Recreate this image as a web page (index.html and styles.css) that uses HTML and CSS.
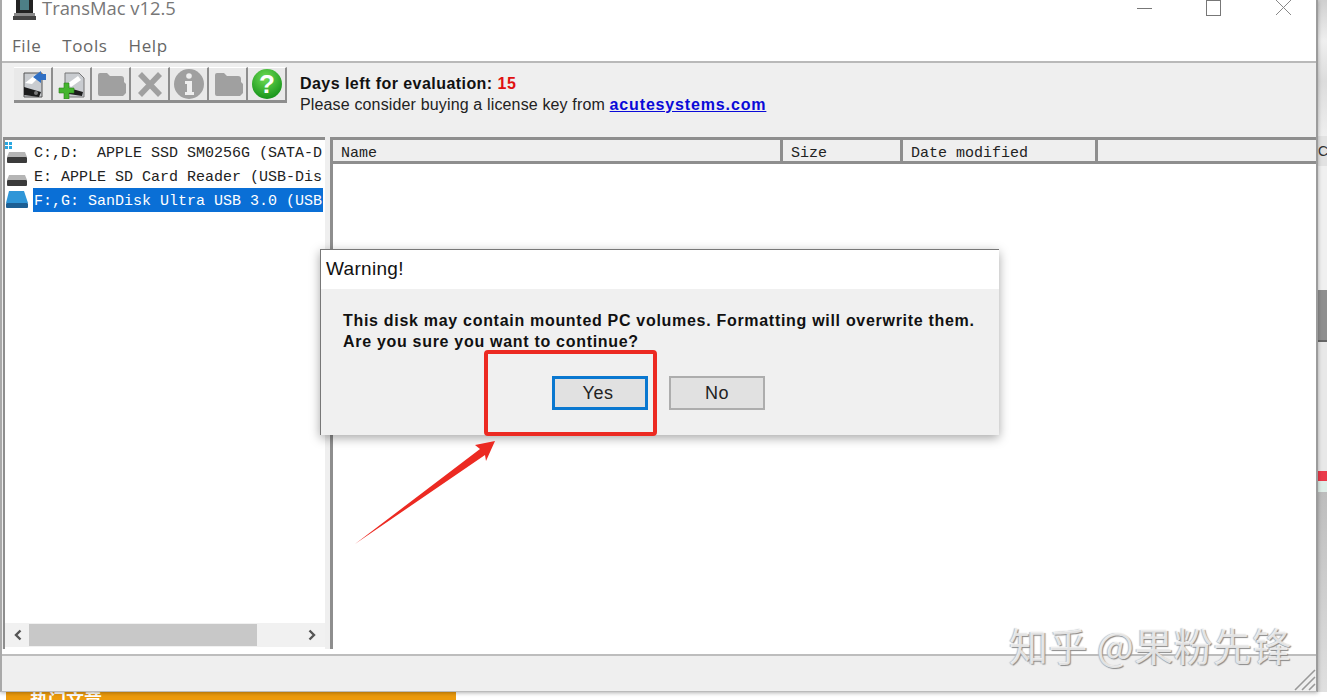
FILE: index.html
```html
<!DOCTYPE html>
<html lang="en">
<head>
  <meta charset="UTF-8" />
  <title>TransMac v12.5</title>
  <link rel="stylesheet" href="styles.css">
</head>
<body>
  <div class="screen">
    <div class="app">
      <!-- Title bar -->
      <header class="titlebar">
        <svg class="app-icon" width="26" height="22" viewBox="0 0 26 22">
          <rect x="4" y="0" width="17" height="14" fill="#222"/>
          <rect x="8" y="0" width="9" height="11" fill="#4d7f86"/>
          <rect x="2" y="14" width="21" height="3" fill="#8a8a8a"/>
          <rect x="1" y="17" width="23" height="4" fill="#444"/>
        </svg>
        <span class="app-title">TransMac v12.5</span>
        <div class="win-controls">
          <svg width="16" height="16" viewBox="0 0 16 16"><path d="M0 8.5H15" stroke="#777" fill="none"/></svg>
          <svg width="16" height="16" viewBox="0 0 16 16"><rect x="0.5" y="0.5" width="14" height="15" stroke="#777" fill="none"/></svg>
          <svg width="17" height="16" viewBox="0 0 17 16"><path d="M1 0L16 15M16 0L1 15" stroke="#888" fill="none"/></svg>
        </div>
      </header>

      <nav class="menubar">
        <span>File</span>
        <span>Tools</span>
        <span>Help</span>
      </nav>

      <!-- Toolbar -->
      <section class="toolbar">
        <div class="tools">
          <button class="tool">
            <svg width="30" height="30" viewBox="0 0 30 30">
              <path d="M6 4H24V28H6Z" fill="#c9ccd0" stroke="#555"/>
              <path d="M7 14L17 6H23L14 15Z" fill="#fff"/>
              <path d="M15 8L23 2V5H28V11H23V14Z" fill="#2f6fc4"/>
              <path d="M6 18L23 23L21 28L6 26Z" fill="#1c1c1c"/>
              <circle cx="18" cy="24" r="2" fill="#7a7a7a"/>
            </svg>
          </button>
          <button class="tool">
            <svg width="30" height="30" viewBox="0 0 30 30">
              <path d="M8 4H22L27 9V28H8Z" fill="#c9ccd0" stroke="#777"/>
              <path d="M10 15L21 7L24 11L14 18Z" fill="#fff"/>
              <path d="M12 19L26 23L25 27L12 25Z" fill="#1c1c1c"/>
              <path d="M7 14H12V19H17V24H12V30H7V24H2V19H7Z" fill="#45b52f" stroke="#2b7d1c" stroke-width="0.6"/>
            </svg>
          </button>
          <button class="tool">
            <svg width="30" height="30" viewBox="0 0 30 30"><use href="#folder-off"/></svg>
          </button>
          <button class="tool">
            <svg width="30" height="30" viewBox="0 0 30 30"><path d="M5 5L25 26M25 5L5 26" stroke="#a0a0a0" stroke-width="5.5" fill="none"/></svg>
          </button>
          <button class="tool">
            <svg width="32" height="32" viewBox="0 0 32 32">
              <circle cx="16" cy="16" r="15" fill="#a0a0a0"/>
              <circle cx="16" cy="8" r="2.8" fill="#efefef"/>
              <path d="M12 13H19V24H21V27H12V24H14V16H12Z" fill="#efefef"/>
            </svg>
          </button>
          <button class="tool">
            <svg width="30" height="30" viewBox="0 0 30 30"><use href="#folder-off"/></svg>
          </button>
          <button class="tool">
            <svg width="32" height="32" viewBox="0 0 32 32">
              <defs>
                <radialGradient id="greenBall" cx="0.45" cy="0.3" r="0.8">
                  <stop offset="0" stop-color="#6fdc55"/>
                  <stop offset="1" stop-color="#0a8a12"/>
                </radialGradient>
              </defs>
              <circle cx="16" cy="16" r="15" fill="url(#greenBall)"/>
              <text x="16" y="25" class="help-mark">?</text>
            </svg>
          </button>
        </div>
        <div class="eval">
          <div class="eval-days">Days left for evaluation: <span class="eval-num">15</span></div>
          <div class="eval-buy">Please consider buying a license key from <a href="#">acutesystems.com</a></div>
        </div>
      </section>

      <!-- Panes -->
      <main class="panes">
        <aside class="tree">
          <div class="tree-list">
            <div class="tree-row">
              <svg class="drive" width="26" height="24" viewBox="0 0 26 24">
                <rect x="0" y="2" width="3" height="3" fill="#2aa7e0"/><rect x="4" y="2" width="3" height="3" fill="#2aa7e0"/>
                <rect x="0" y="6" width="3" height="3" fill="#2aa7e0"/><rect x="4" y="6" width="3" height="3" fill="#2aa7e0"/>
                <path d="M4 12H20L22 17H2Z" fill="#b5b5b5"/>
                <rect x="2" y="17" width="20" height="6" rx="1" fill="#3b3b3b"/>
              </svg>
              <span>C:,D:  APPLE SSD SM0256G (SATA-D</span>
            </div>
            <div class="tree-row">
              <svg class="drive" width="26" height="24" viewBox="0 0 26 24">
                <path d="M4 11H20L22 16H2Z" fill="#b5b5b5"/>
                <rect x="2" y="16" width="20" height="6" rx="1" fill="#3b3b3b"/>
              </svg>
              <span>E: APPLE SD Card Reader (USB-Dis</span>
            </div>
            <div class="tree-row selected">
              <svg class="drive" width="26" height="24" viewBox="0 0 26 24">
                <path d="M4 3H19L23 15H1Z" fill="#2f96d8"/>
                <rect x="1" y="15" width="22" height="5" rx="1" fill="#1d5f94"/>
              </svg>
              <span>F:,G: SanDisk Ultra USB 3.0 (USB</span>
            </div>
          </div>
          <div class="hscroll">
            <svg width="10" height="12" viewBox="0 0 10 12"><path d="M7.5 1.5L3 6L7.5 10.5" stroke="#555" stroke-width="2.4" fill="none"/></svg>
            <div class="hscroll-track"><div class="hscroll-thumb"></div></div>
            <svg width="10" height="12" viewBox="0 0 10 12"><path d="M2.5 1.5L7 6L2.5 10.5" stroke="#555" stroke-width="2.4" fill="none"/></svg>
          </div>
        </aside>
        <section class="files">
          <div class="files-head">
            <div class="col col-name">Name</div>
            <div class="col col-size">Size</div>
            <div class="col col-date">Date modified</div>
            <div class="col col-rest"></div>
          </div>
        </section>
      </main>

      <footer class="statusbar">
        <svg class="grip" width="22" height="22" viewBox="0 0 22 22">
          <path d="M1 21L21 1M8 21L21 8M15 21L21 15" stroke="#999" stroke-width="1.6" fill="none"/>
        </svg>
      </footer>
    </div>

    <!-- What shows of the page behind the window -->
    <div class="behind-right">
      <div class="br-top"></div>
      <div class="br-ca">Ca</div>
      <div class="br-light"></div>
      <div class="br-dark"></div>
      <div class="br-red"></div>
      <div class="br-bottom"></div>
    </div>
    <div class="behind-bottom">
      <div class="banner">热门文章</div>
    </div>
  </div>

  <!-- Warning dialog -->
  <div class="dialog">
    <div class="dialog-title">Warning!</div>
    <div class="dialog-body">
      <p>This disk may contain mounted PC volumes. Formatting will overwrite them.<br>Are you sure you want to continue?</p>
      <div class="dialog-actions">
        <button class="btn btn-default">Yes</button>
        <button class="btn">No</button>
      </div>
    </div>
  </div>

  <!-- Red annotation -->
  <div class="mark-box"></div>
  <svg class="mark-arrow" width="150" height="110" viewBox="350 438 150 110">
    <polygon points="355,544 480,449 475,445 495,441 486,461 485,455" fill="#ec2a22"/>
  </svg>

  <div class="watermark">知乎 @果粉先锋</div>

  <svg width="0" height="0" class="defs">
    <symbol id="folder-off" viewBox="0 0 30 30">
      <path d="M2 6Q2 4 4 4H11L14 7H25Q28 7 28 10V13L30 15V24L27 27H4Q2 27 2 25Z" fill="#a0a0a0"/>
    </symbol>
  </svg>
</body>
</html>
```

FILE: styles.css
```css
html, body {
  margin: 0;
  height: 700px;
  overflow: hidden;
  background: #fff;
}

body {
  position: relative;
  font-family: "Liberation Sans", Arial, sans-serif;
  color: #111;
}

.defs {
  position: absolute;
}

.screen {
  display: grid;
  grid-template-columns: 1318px 9px;
  grid-template-rows: 692px 8px;
  height: 700px;
}

/* ==== Window ==== */
.app {
  position: relative;
  display: flex;
  flex-direction: column;
  background: #fff;
  border-left: 2px solid #a9a9a9;
  border-right: 2px solid #9c9c9c;
  border-bottom: 1px solid #bbb;
  box-sizing: border-box;
  box-shadow: 0 1px 4px rgba(0,0,0,0.3);
  z-index: 1;
}

.titlebar {
  display: flex;
  align-items: flex-start;
  height: 30px;
  flex: none;
  padding-left: 10px;
}

.app-icon {
  margin-top: -1px;
}

.app-title {
  margin-left: 4px;
  margin-top: -4px;
  font-family: "Open Sans", sans-serif;
  font-size: 18.4px;
  line-height: 24px;
  color: #777;
}

.win-controls {
  margin-left: auto;
  display: flex;
  align-items: flex-start;
  gap: 53px;
  margin-right: 24px;
  margin-top: 0;
}

.menubar {
  display: flex;
  gap: 21px;
  height: 31px;
  flex: none;
  padding-left: 10px;
  font-family: "Open Sans", sans-serif;
  font-size: 17px;
  line-height: 31px;
  color: #666;
  letter-spacing: 0.6px;
  border-bottom: 2px solid #b9b9b9;
}

.toolbar {
  display: flex;
  height: 74px;
  flex: none;
  background: #efefef;
  box-sizing: border-box;
  padding: 4px 0 0 12px;
}

.tools {
  display: flex;
  height: 36px;
}

.tool {
  width: 39px;
  height: 36px;
  padding: 0;
  border: none;
  border-right: 2px solid #8e8e8e;
  border-bottom: 3px solid #8e8e8e;
  border-top: 1px solid #fff;
  background: #e9e9e9;
  display: flex;
  align-items: center;
  justify-content: center;
}

.help-mark {
  font-family: "Liberation Sans", sans-serif;
  font-size: 26px;
  font-weight: 700;
  fill: #fff;
  text-anchor: middle;
}

.eval {
  margin-left: 13px;
  margin-top: 6px;
  font-size: 16px;
  line-height: 21px;
}

.eval-days {
  font-weight: 700;
  letter-spacing: 0.45px;
}

.eval-num {
  color: #e01010;
}

.eval-buy {
  letter-spacing: 0.15px;
  color: #222;
}

.eval-buy a {
  color: #0a0ad8;
  font-weight: 700;
  letter-spacing: 0.85px;
}

/* ==== Panes ==== */
.panes {
  display: flex;
  flex: 1;
  min-height: 0;
  background: #efefef;
  gap: 5px;
  padding-left: 1px;
}

.tree {
  width: 322px;
  flex: none;
  display: flex;
  flex-direction: column;
  box-sizing: border-box;
  border-top: 3px solid #8e8e8e;
  border-left: 2px solid #8e8e8e;
  background: #fff;
}

.tree-list {
  flex: 1;
  overflow: hidden;
  padding-right: 2px;
}

.tree-row {
  display: flex;
  height: 24px;
  align-items: center;
  font-family: "Liberation Mono", monospace;
  font-size: 15px;
  color: #222;
  white-space: pre;
}

.drive {
  flex: none;
  width: 26px;
  margin-right: 2px;
}

.tree-row span {
  flex: 1;
  padding-left: 1px;
  padding-top: 2px;
  height: 24px;
  box-sizing: border-box;
  line-height: 24px;
  overflow: hidden;
}

.tree-row.selected span {
  background: #0a6fd6;
  color: #fff;
}

.hscroll {
  display: flex;
  align-items: center;
  height: 24px;
  background: #f1f1f1;
  padding: 0 8px;
  gap: 6px;
  margin-bottom: 2px;
}

.hscroll-track {
  flex: 1;
  height: 22px;
}

.hscroll-thumb {
  width: 228px;
  height: 100%;
  background: #c8c8c8;
}

.files {
  flex: 1;
  border-left: 3px solid #8e8e8e;
  background: #fff;
}

.files-head {
  display: flex;
  height: 27px;
  box-sizing: border-box;
  border-top: 3px solid #8e8e8e;
  border-bottom: 3px solid #8e8e8e;
  background: #efefef;
  font-family: "Liberation Mono", monospace;
  font-size: 15px;
  line-height: 27px;
  color: #222;
}

.col {
  box-sizing: border-box;
  padding-left: 8px;
  border-right: 3px solid #8e8e8e;
}

.col-name { width: 450px; }
.col-size { width: 120px; }
.col-date { width: 195px; }

.col-rest {
  flex: 1;
  border-right: none;
}

.statusbar {
  position: relative;
  height: 37px;
  flex: none;
  margin-top: 5px;
  background: #efefef;
  border-top: 2px solid #bdbdbd;
  box-sizing: border-box;
}

.grip {
  position: absolute;
  right: 0;
  bottom: 0;
}

/* ==== Behind the window ==== */
.behind-right {
  display: flex;
  flex-direction: column;
  overflow: hidden;
  background: #e6e6e6;
}

.br-top {
  height: 136px;
  background: linear-gradient(#cfcfcf, #efefef 30%, #dcdcdc 60%, #efefef);
}

.br-ca {
  height: 30px;
  font-size: 14px;
  line-height: 30px;
  color: #333;
  background: #e2e2e2;
  white-space: nowrap;
}

.br-light {
  height: 124px;
  background: #f0f0f0;
}

.br-dark {
  height: 52px;
  background: #8f8f8f;
  border-bottom: 2px solid #666;
  box-sizing: border-box;
}

.br-red {
  height: 150px;
  background: linear-gradient(#e8e8e8 86%, #ea3a4a 86%, #ea3a4a 93%, #dfeee8 93%);
}

.br-bottom {
  flex: 1;
  background: linear-gradient(#bdbdbd 0, #e0e0e0 100%);
}

.behind-bottom {
  grid-column: 1 / 3;
  overflow: hidden;
  background: #fff;
}

.banner {
  width: 450px;
  height: 8px;
  margin-left: 6px;
  padding-left: 24px;
  box-sizing: border-box;
  background: #ec9a0c;
  color: #fff;
  font-family: "Noto Sans CJK SC", sans-serif;
  font-size: 18px;
  font-weight: 700;
  line-height: 14px;
}

/* ==== Dialog ==== */
.dialog {
  position: absolute;
  z-index: 2;
  left: 320px;
  top: 249px;
  width: 679px;
  height: 186px;
  box-sizing: border-box;
  display: flex;
  flex-direction: column;
  border: 1px solid #777;
  border-bottom: none;
  border-right: none;
  background: #f0f0f0;
  box-shadow: 0 3px 10px rgba(0,0,0,0.35);
}

.dialog-title {
  height: 39px;
  flex: none;
  background: #fff;
  padding-left: 5px;
  font-size: 19px;
  letter-spacing: 0.3px;
  line-height: 38px;
  color: #111;
}

.dialog-body {
  flex: 1;
  padding: 21px 0 0 22px;
}

.dialog-body p {
  margin: 0;
  font-size: 16px;
  font-weight: 700;
  letter-spacing: 0.7px;
  line-height: 21px;
  color: #111;
  white-space: nowrap;
}

.dialog-actions {
  display: flex;
  gap: 21px;
  margin-top: 24px;
  padding-left: 209px;
}

.btn {
  width: 96px;
  height: 34px;
  padding: 0;
  background: #e1e1e1;
  border: 2px solid #adadad;
  font-family: "Liberation Sans", sans-serif;
  font-size: 18px;
  letter-spacing: 0.5px;
  color: #222;
}

.btn-default {
  border: 3px solid #0a78d0;
  padding-right: 4px;
}

/* ==== Annotation ==== */
.mark-box {
  position: absolute;
  z-index: 3;
  left: 484px;
  top: 350px;
  width: 173px;
  height: 86px;
  box-sizing: border-box;
  border: 4px solid #ec2a22;
  border-radius: 4px;
}

.mark-arrow {
  position: absolute;
  z-index: 3;
  left: 350px;
  top: 438px;
}

.watermark {
  position: absolute;
  z-index: 3;
  left: 1009px;
  top: 619px;
  font-family: "Noto Sans CJK SC", sans-serif;
  font-size: 39px;
  letter-spacing: 0.4px;
  line-height: 50px;
  white-space: pre;
  color: rgba(255,255,255,0.75);
  text-shadow: 1px 1px 1px #8a8a8a, -1px 0 1px #bbb;
}
```
